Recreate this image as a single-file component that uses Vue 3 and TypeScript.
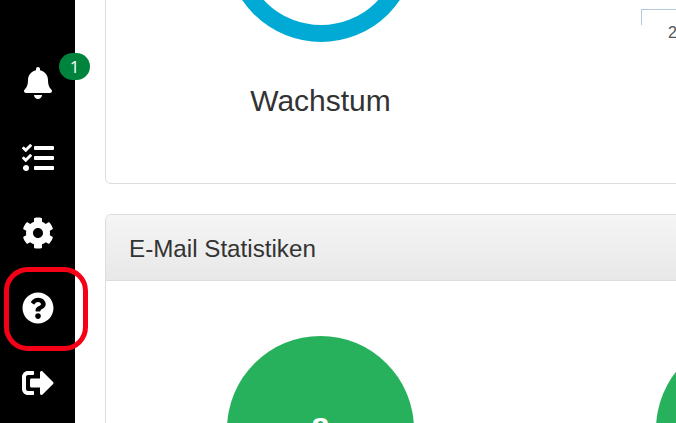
<script setup lang="ts">
// Seitenleiste: FontAwesome-Pfade
const navItems = [
  {
    name: 'bell',
    box: '0 0 448 512',
    d: 'M224 512c35.32 0 63.97-28.65 63.97-64H160.03c0 35.35 28.65 64 63.97 64zm215.39-149.71c-19.32-20.76-55.47-51.99-55.47-154.29 0-77.7-54.48-139.9-127.94-155.16V32c0-17.67-14.32-32-31.98-32s-31.98 14.33-31.98 32v20.84C118.56 68.1 64.08 130.3 64.08 208c0 102.3-36.15 133.53-55.47 154.29-6 6.45-8.66 14.16-8.61 21.71.11 16.4 12.98 32 32.1 32h383.8c19.12 0 32-15.6 32.1-32 .05-7.55-2.61-15.27-8.61-21.71z',
    badge: '1',
  },
  {
    name: 'tasks',
    box: '0 0 512 512',
    d: 'M139.61 35.5a12 12 0 0 0-17 0L58.93 98.81l-22.7-22.12a12 12 0 0 0-17 0L3.53 92.41a12 12 0 0 0 0 17l47.59 47.4a12.78 12.78 0 0 0 17.61 0l15.59-15.62L156.52 69a12.09 12.09 0 0 0 .09-17zm0 159.19a12 12 0 0 0-17 0l-63.68 63.72-22.7-22.1a12 12 0 0 0-17 0L3.53 252a12 12 0 0 0 0 17L51 316.5a12.77 12.77 0 0 0 17.6 0l15.7-15.69 72.2-72.22a12 12 0 0 0 .09-16.9zM64 368c-26.49 0-48.59 21.5-48.59 48S37.53 464 64 464a48 48 0 0 0 0-96zm432 16H208a16 16 0 0 0-16 16v32a16 16 0 0 0 16 16h288a16 16 0 0 0 16-16v-32a16 16 0 0 0-16-16zm0-320H208a16 16 0 0 0-16 16v32a16 16 0 0 0 16 16h288a16 16 0 0 0 16-16V80a16 16 0 0 0-16-16zm0 160H208a16 16 0 0 0-16 16v32a16 16 0 0 0 16 16h288a16 16 0 0 0 16-16v-32a16 16 0 0 0-16-16z',
  },
  {
    name: 'cog',
    box: '0 0 512 512',
    d: 'M487.4 315.7l-42.6-24.6c4.3-23.2 4.3-47 0-70.2l42.6-24.6c4.9-2.8 7.1-8.6 5.5-14-11.1-35.6-30-67.8-54.7-94.6-3.8-4.1-10-5.1-14.8-2.3L380.8 110c-17.9-15.4-38.5-27.3-60.8-35.1V25.8c0-5.6-3.9-10.5-9.4-11.7-36.7-8.2-74.3-7.8-109.2 0-5.5 1.2-9.4 6.1-9.4 11.7V75c-22.2 7.9-42.8 19.8-60.8 35.1L88.7 85.5c-4.9-2.8-11-1.9-14.8 2.3-24.7 26.7-43.6 58.9-54.7 94.6-1.7 5.4.6 11.2 5.5 14L67.3 221c-4.3 23.2-4.3 47 0 70.2l-42.6 24.6c-4.9 2.8-7.1 8.6-5.5 14 11.1 35.6 30 67.8 54.7 94.6 3.8 4.1 10 5.1 14.8 2.3l42.6-24.6c17.9 15.4 38.5 27.3 60.8 35.1v49.2c0 5.6 3.9 10.5 9.4 11.7 36.7 8.2 74.3 7.8 109.2 0 5.5-1.2 9.4-6.1 9.4-11.7v-49.2c22.2-7.9 42.8-19.8 60.8-35.1l42.6 24.6c4.9 2.8 11 1.9 14.8-2.3 24.7-26.7 43.6-58.9 54.7-94.6 1.5-5.5-.7-11.3-5.6-14.1zM256 336c-44.1 0-80-35.9-80-80s35.9-80 80-80 80 35.9 80 80-35.9 80-80 80z',
  },
  {
    name: 'help',
    box: '0 0 512 512',
    d: 'M504 256c0 136.997-111.043 248-248 248S8 392.997 8 256C8 119.083 119.043 8 256 8s248 111.083 248 248zM262.655 90c-54.497 0-89.255 22.957-116.549 63.758-3.536 5.286-2.353 12.415 2.715 16.258l34.699 26.31c5.205 3.947 12.621 3.008 16.665-2.122 17.864-22.658 30.113-35.797 57.303-35.797 20.429 0 45.698 13.148 45.698 32.958 0 14.976-12.363 22.667-32.534 33.976C247.128 238.528 216 254.941 216 296v4c0 6.627 5.373 12 12 12h56c6.627 0 12-5.373 12-12v-1.333c0-28.462 83.186-29.647 83.186-106.667 0-58.002-60.165-102-116.531-102zM256 338c-25.365 0-46 20.635-46 46 0 25.364 20.635 46 46 46s46-20.636 46-46c0-25.365-20.635-46-46-46z',
    marked: true,
  },
  {
    name: 'logout',
    box: '0 0 512 512',
    d: 'M497 273L329 441c-15 15-41 4.5-41-17v-96H152c-13.3 0-24-10.7-24-24v-96c0-13.3 10.7-24 24-24h136V88c0-21.4 25.9-32 41-17l168 168c9.3 9.4 9.3 24.6 0 34zM192 436v-40c0-6.6-5.4-12-12-12H96c-17.7 0-32-14.3-32-32V160c0-17.7 14.3-32 32-32h84c6.6 0 12-5.4 12-12V76c0-6.6-5.4-12-12-12H96c-53 0-96 43-96 96v192c0 53 43 96 96 96h84c6.6 0 12-5.4 12-12z',
  },
];

const mailStats = ['8', '3'];
</script>

<template>
  <div class="page">
    <nav class="sidebar">
      <div v-for="item in navItems" :key="item.name" class="nav-item">
        <svg class="nav-icon" :viewBox="item.box" fill="#fff">
          <path :d="item.d" />
        </svg>
        <span v-if="item.badge" class="badge">{{ item.badge }}</span>
        <span v-if="item.marked" class="marker"></span>
      </div>
    </nav>

    <main class="content">
      <section class="card growth">
        <div class="growth-col">
          <div class="ring"></div>
          <div class="growth-label">Wachstum</div>
        </div>
        <div class="chart-col">
          <div class="chart-axis"></div>
          <div class="chart-tick">2</div>
        </div>
      </section>

      <section class="card mail">
        <header class="card-header">E-Mail Statistiken</header>
        <div class="mail-body">
          <div v-for="(stat, i) in mailStats" :key="i" class="mail-col">
            <div class="stat-circle">{{ stat }}</div>
          </div>
        </div>
      </section>
    </main>
  </div>
</template>

<style>
html,
body {
  margin: 0;
  overflow: hidden;
  background: #fff;
}
</style>

<style scoped>
.page {
  display: flex;
  width: 676px;
  height: 423px;
  overflow: hidden;
  font-family: 'Liberation Sans', Arial, sans-serif;
  color: #333;
}

.sidebar {
  flex: 0 0 75px;
  box-sizing: border-box;
  padding-top: 45px;
  background: #000;
  z-index: 1;
}

.nav-item {
  position: relative;
  display: flex;
  align-items: center;
  justify-content: center;
  height: 75px;
}

.nav-icon {
  width: 32px;
  height: 32px;
}

.badge {
  position: absolute;
  top: 8px;
  left: 59px;
  width: 31px;
  height: 27px;
  border-radius: 14px;
  background: #00843d;
  color: #fff;
  font-family: 'Open Sans', sans-serif;
  font-size: 17px;
  line-height: 27px;
  text-align: center;
}

.marker {
  position: absolute;
  top: -3px;
  left: 4px;
  width: 84px;
  height: 84px;
  box-sizing: border-box;
  border: 5px solid #f60018;
  border-radius: 24px;
}

.content {
  flex: 0 0 auto;
  padding-left: 30px;
}

.card {
  box-sizing: border-box;
  width: 900px;
  border: 1px solid #ddd;
  border-radius: 6px;
  background: #fff;
}

.growth {
  display: flex;
  height: 344px;
  margin-top: -160px;
}

.growth-col {
  display: flex;
  flex: 0 0 429px;
  flex-direction: column;
  align-items: center;
  padding-top: 11px;
}

.ring {
  box-sizing: border-box;
  width: 190px;
  height: 190px;
  border: 17px solid #00aad4;
  border-radius: 50%;
}

.growth-label {
  margin-top: 41px;
  font-size: 30px;
  line-height: 36px;
}

.chart-col {
  padding: 168px 0 0 106px;
}

.chart-axis {
  box-sizing: border-box;
  width: 200px;
  height: 16px;
  border-top: 1px solid #b4c9df;
  border-left: 1px solid #b4c9df;
}

.chart-tick {
  margin-top: 1px;
  margin-left: 27px;
  color: #555;
  font-size: 16px;
  line-height: 14px;
}

.mail {
  margin-top: 30px;
  height: 400px;
}

.card-header {
  box-sizing: border-box;
  height: 66px;
  padding-left: 23px;
  border-bottom: 1px solid #ddd;
  border-radius: 6px 6px 0 0;
  background: linear-gradient(#f5f5f5, #e8e8e8);
  font-size: 24.2px;
  line-height: 67px;
}

.mail-body {
  display: flex;
  padding-top: 55px;
}

.mail-col {
  display: flex;
  flex: 0 0 429px;
  justify-content: center;
}

.stat-circle {
  display: flex;
  flex: 0 0 187px;
  align-items: center;
  justify-content: center;
  height: 187px;
  border-radius: 50%;
  background: #27b15c;
  color: #fff;
  font-size: 32px;
  font-weight: 700;
}
</style>
